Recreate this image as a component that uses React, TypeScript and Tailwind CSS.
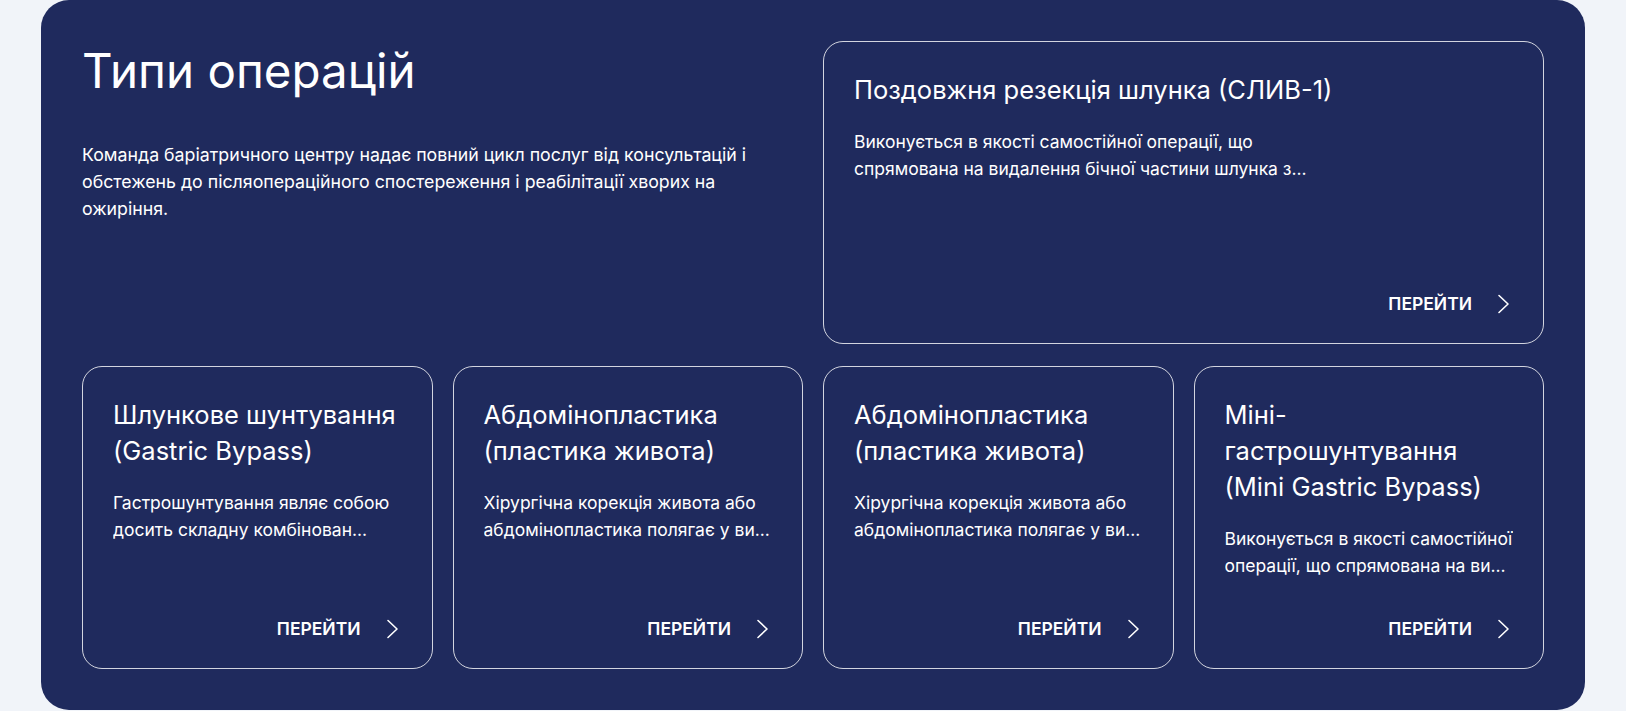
import React from 'react';

interface Operation {
     title: string;
     text: string;
}

// descriptions are stored already shortened, as the list page shows them
const operations: Operation[] = [
     {
          title: 'Шлункове шунтування (Gastric Bypass)',
          text: 'Гастрошунтування являє собою досить складну комбінован...',
     },
     {
          title: 'Абдомінопластика (пластика живота)',
          text: 'Хірургічна корекція живота або абдомінопластика полягає у ви...',
     },
     {
          title: 'Абдомінопластика (пластика живота)',
          text: 'Хірургічна корекція живота або абдомінопластика полягає у ви...',
     },
     {
          title: 'Міні-гастрошунтування (Mini Gastric Bypass)',
          text: 'Виконується в якості самостійної операції, що спрямована на ви...',
     },
];

const Chevron = () => (
     <svg width="18" height="20" viewBox="0 0 18 20" fill="none" className="shrink-0">
          <path d="M4 1.5L13 10L4 18.5" stroke="white" strokeWidth="1.6" strokeLinecap="round" strokeLinejoin="round" />
     </svg>
);

const GoLink = () => (
     <a
          href="#"
          className="mt-auto flex items-center justify-end gap-[23px] text-[17.5px] font-semibold uppercase leading-6 text-white"
     >
          Перейти
          <Chevron />
     </a>
);

const OperationCard: React.FC<Operation & { wide?: boolean }> = ({ title, text, wide }) => (
     <div
          className={`flex h-[303px] flex-col rounded-[20px] border border-white/80 px-[30px] pt-[30px] pb-[27px] ${
               wide ? 'col-span-2' : ''
          }`}
     >
          <h3 className="text-[25.5px] font-normal leading-9 text-white">{title}</h3>
          <p className={`mt-5 line-clamp-2 text-[17.5px] leading-[27px] text-white ${wide ? 'max-w-[470px]' : ''}`}>
               {text}
          </p>
          <GoLink />
     </div>
);

export default function App() {
     return (
          <div className="min-h-screen bg-[#f1f4f9] px-[41px]" style={{ fontFamily: 'Inter, "Noto Sans", sans-serif' }}>
               <section className="rounded-[28px] bg-[#1f2a5d] p-[41px]">
                    <div className="grid grid-cols-4 gap-x-5 gap-y-[22px]">
                         <div className="col-span-2">
                              <h2 className="text-[47.5px] font-normal leading-[60px] text-white">Типи операцій</h2>
                              <p className="mt-[40px] max-w-[700px] text-[17.75px] leading-[27px] text-white">
                                   Команда баріатричного центру надає повний цикл послуг від консультацій і обстежень до
                                   післяопераційного спостереження і реабілітації хворих на ожиріння.
                              </p>
                         </div>
                         <OperationCard
                              wide
                              title="Поздовжня резекція шлунка (СЛИВ-1)"
                              text="Виконується в якості самостійної операції, що спрямована на видалення бічної частини шлунка з..."
                         />
                         {operations.map((op, i) => (
                              <OperationCard key={i} title={op.title} text={op.text} />
                         ))}
                    </div>
               </section>
          </div>
     );
}
